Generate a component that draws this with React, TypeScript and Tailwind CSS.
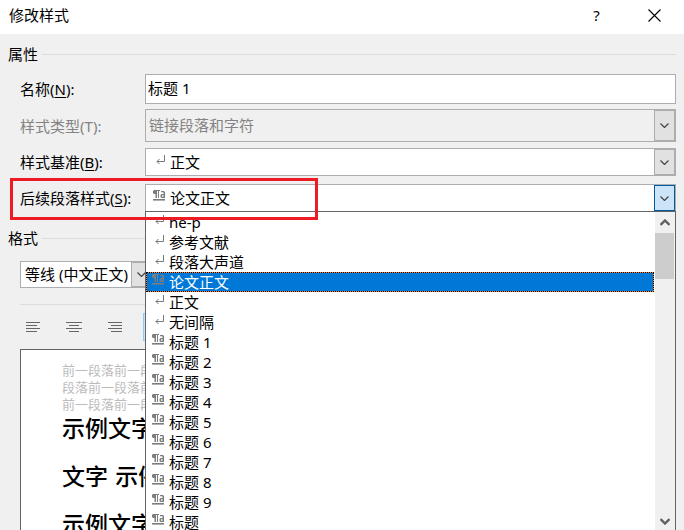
import { useState } from 'react';

interface StyleItem {
  name: string;
  kind: 'paragraph' | 'linked';
}

const STYLES: StyleItem[] = [
  { name: 'he-p', kind: 'paragraph' },
  { name: '参考文献', kind: 'paragraph' },
  { name: '段落大声道', kind: 'paragraph' },
  { name: '论文正文', kind: 'linked' },
  { name: '正文', kind: 'paragraph' },
  { name: '无间隔', kind: 'paragraph' },
  { name: '标题 1', kind: 'linked' },
  { name: '标题 2', kind: 'linked' },
  { name: '标题 3', kind: 'linked' },
  { name: '标题 4', kind: 'linked' },
  { name: '标题 5', kind: 'linked' },
  { name: '标题 6', kind: 'linked' },
  { name: '标题 7', kind: 'linked' },
  { name: '标题 8', kind: 'linked' },
  { name: '标题 9', kind: 'linked' },
  { name: '标题', kind: 'linked' },
];

const ALIGNMENTS = [
  { label: '左对齐', d: 'M0 .5h14M0 3.5h11M0 6.5h14M0 9.5h11' },
  { label: '居中', d: 'M0 .5h16M3 3.5h10M0 6.5h16M3 9.5h10' },
  { label: '右对齐', d: 'M2 .5h14M5 3.5h11M2 6.5h14M5 9.5h11' },
];

const StyleIcon = ({ kind }: { kind: StyleItem['kind'] }) =>
  kind === 'paragraph' ? (
    <svg width="13" height="12" viewBox="0 0 13 12" fill="none" stroke="#777" aria-hidden="true">
      <path d="M11.5 1v6.5H4" />
      <path d="M6.500 5L4 7.5l2.500 2.500" />
    </svg>
  ) : (
    <svg width="13" height="12" viewBox="0 0 13 12" fill="#7d7d7d" aria-hidden="true">
      <path d="M1 0h6v1H6v7H5V1H4v7H2.500V4H1L0 3V1z" />
      <path fillRule="evenodd" d="M8 1h3l1 1v6H8.500L7.500 7V5l1-1h2V2.300H8zM9 5.200v1.600h1.500V5.200z" />
      <path d="M0 9h12v1.600H0z" />
    </svg>
  );

const Chevron = () => (
  <svg width="9" height="5" viewBox="0 0 9 5" fill="none" stroke="#444" strokeWidth="1.200" aria-hidden="true">
    <path d="M.5.5l4 4 4-4" />
  </svg>
);

const ArrowBox = ({ active = false }: { active?: boolean }) => (
  <span
    className={`pointer-events-none absolute inset-y-px right-px flex w-[21px] items-center justify-center border ${
      active ? 'border-[#005a9e] bg-[#cce4f7]' : 'border-[#adadad] bg-[#e1e1e1]'
    }`}
  >
    <Chevron />
  </span>
);

const GroupTitle = ({ children }: { children: string }) => (
  <div className="flex h-6 items-center gap-1 px-2">
    <h2>{children}</h2>
    <span className="h-px flex-1 bg-[#dcdcdc]" />
  </div>
);

const FieldLabel = ({ id, text, hotkey, disabled = false }: { id: string; text: string; hotkey: string; disabled?: boolean }) => (
  <label htmlFor={id} className={`w-[125px] shrink-0 whitespace-nowrap ${disabled ? 'text-[#838383]' : ''}`}>
    {text}(<span className={disabled ? '' : 'underline underline-offset-2'}>{hotkey}</span>):
  </label>
);

const StyleList = ({ selected, onSelect }: { selected: string; onSelect: (name: string) => void }) => (
  <div className="absolute inset-x-0 top-[27px] z-10 flex border border-[#646464] bg-white">
    <ul role="listbox" aria-label="后续段落样式" className="flex-1 pr-px">
      {STYLES.map((item) => (
        <li
          key={item.name}
          role="option"
          aria-selected={item.name === selected}
          onClick={() => onSelect(item.name)}
          className={`flex h-5 items-center gap-1 border border-dotted pl-[5px] ${
            item.name === selected
              ? 'border-black text-white [background:linear-gradient(#0078d7,#0078d7)_padding-box,#ff8728]'
              : 'border-transparent'
          }`}
        >
          <span className="mb-1">
            <StyleIcon kind={item.kind} />
          </span>
          {item.name}
        </li>
      ))}
    </ul>
    <div className="flex w-5 flex-col items-center justify-between bg-[#f0f0f0] py-[7px]">
      <svg width="10" height="7" viewBox="0 0 10 7" fill="none" stroke="#606060" strokeWidth="2.400" aria-hidden="true">
        <path d="M.5 6L5 1.500 9.500 6" />
      </svg>
      <span className="absolute right-px top-[21px] h-[46px] w-[19px] bg-[#cdcdcd]" />
      <svg width="10" height="7" viewBox="0 0 10 7" fill="none" stroke="#606060" strokeWidth="2.400" aria-hidden="true">
        <path d="M.5 1L5 5.500 9.500 1" />
      </svg>
    </div>
  </div>
);

const App = () => {
  const [name, setName] = useState('标题 1');
  const [next, setNext] = useState('论文正文');
  const nextKind = STYLES.find((s) => s.name === next)?.kind ?? 'linked';

  return (
    <main className="h-screen overflow-hidden bg-[#f0f0f0] font-['Noto_Sans','Noto_Sans_CJK_SC',sans-serif] text-[15px] leading-5 text-black">
      <header className="flex h-[34px] items-center bg-white pb-1 pl-[9px]">
        <h1 className="flex-1">修改样式</h1>
        <button type="button" aria-label="帮助" className="w-[55px]">
          ?
        </button>
        <button type="button" aria-label="关闭" className="flex w-[60px] justify-center">
          <svg width="13" height="13" viewBox="0 0 13 13" fill="none" stroke="#000" strokeWidth="1.100">
            <path d="M.5.5l12 12M12.500.5l-12 12" />
          </svg>
        </button>
      </header>

      <section className="pt-2">
        <GroupTitle>属性</GroupTitle>
        <div className="flex flex-col pl-5 pr-2 pt-2">
          <div className="mb-[5px] flex items-center">
            <FieldLabel id="name" text="名称" hotkey="N" />
            <input
              id="name"
              value={name}
              onChange={(e) => setName(e.target.value)}
              className="h-[30px] min-w-0 flex-1 border border-[#abadb3] bg-white px-[2px] pb-1 outline-none"
            />
          </div>
          <div className="mb-[6px] flex items-center">
            <FieldLabel id="type" text="样式类型" hotkey="T" disabled />
            <div className="relative flex-1">
              <select id="type" disabled className="block h-[33px] w-full appearance-none border border-[#adadad] bg-[#f0f0f0] pb-[2px] pl-[3px] text-[#838383] opacity-100">
                <option>链接段落和字符</option>
              </select>
              <ArrowBox />
            </div>
          </div>
          <div className="mb-2 flex items-center">
            <FieldLabel id="base" text="样式基准" hotkey="B" />
            <div className="relative flex-1">
              <select id="base" className="block h-7 w-full appearance-none border border-[#abadb3] bg-white pl-6 outline-none">
                <option>正文</option>
              </select>
              <span className="pointer-events-none absolute left-2 top-[6px]">
                <StyleIcon kind="paragraph" />
              </span>
              <ArrowBox />
            </div>
          </div>
          <div className="relative flex items-center">
            <FieldLabel id="next" text="后续段落样式" hotkey="S" />
            <div className="relative flex-1">
              <select
                id="next"
                value={next}
                onChange={(e) => setNext(e.target.value)}
                className="block h-7 w-full appearance-none border border-[#abadb3] bg-white pl-6 outline-none"
              >
                {STYLES.map((s) => (
                  <option key={s.name}>{s.name}</option>
                ))}
              </select>
              <span className="pointer-events-none absolute left-2 top-[6px]">
                <StyleIcon kind={nextKind} />
              </span>
              <ArrowBox active />
              <StyleList selected={next} onSelect={setNext} />
            </div>
            <span className="pointer-events-none absolute -left-[10px] -top-[6px] z-20 h-[42px] w-[308px] border-3 border-[#ed1c24]" />
          </div>
        </div>
      </section>

      <section className="pt-[14px]">
        <GroupTitle>格式</GroupTitle>
        <div className="pl-5 pr-2 pt-[11px]">
          <div className="relative w-[133px]">
            <select aria-label="字体" className="block h-[27px] w-full appearance-none border border-[#abadb3] bg-white pb-[2px] pl-1 outline-none">
              <option>等线 (中文正文)</option>
            </select>
            <ArrowBox />
          </div>
          <div className="mt-4 h-px bg-[#dcdcdc]" />
          <div className="mt-2 flex h-7 items-center">
            {ALIGNMENTS.map((a) => (
              <button key={a.label} type="button" aria-label={a.label} className="flex w-10 pl-[6px]">
                <svg width="16" height="10" viewBox="0 0 16 10" fill="none" stroke="#666">
                  <path d={a.d} />
                </svg>
              </button>
            ))}
            <button type="button" aria-label="两端对齐" className="ml-[3px] h-7 w-7 border border-[#90c8f6] bg-[#cce4f7]" />
          </div>
          <div className="mt-2 h-screen border border-[#646464] bg-white pl-[41px] pt-3">
            <p className="text-[13px] leading-[17px] text-[#bcbcbc]">
              前一段落前一段
              <br />
              段落前一段落前
              <br />
              前一段落前一段
            </p>
            <p className="-mt-2 font-['DejaVu_Sans','Noto_Sans_CJK_SC',sans-serif] text-[23px] font-medium leading-[48px]">
              示例文字
              <br />
              文字 示例
              <br />
              示例文字
            </p>
          </div>
        </div>
      </section>
    </main>
  );
};

export default App;
